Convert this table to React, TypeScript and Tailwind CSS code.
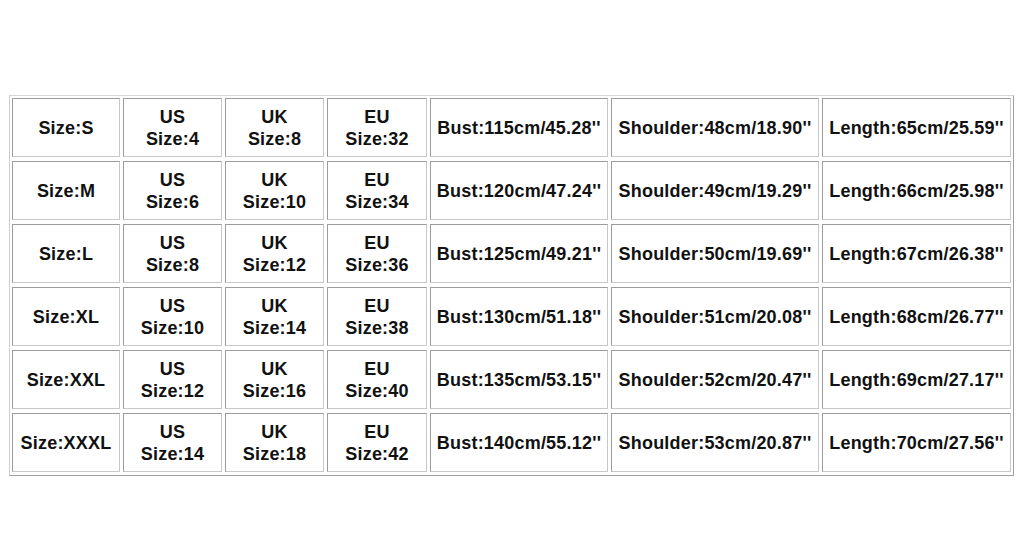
import { Fragment } from 'react'

const rows = [
    { size: 'S', us: '4', uk: '8', eu: '32', bust: '115cm/45.28', shoulder: '48cm/18.90', length: '65cm/25.59' },
    { size: 'M', us: '6', uk: '10', eu: '34', bust: '120cm/47.24', shoulder: '49cm/19.29', length: '66cm/25.98' },
    { size: 'L', us: '8', uk: '12', eu: '36', bust: '125cm/49.21', shoulder: '50cm/19.69', length: '67cm/26.38' },
    { size: 'XL', us: '10', uk: '14', eu: '38', bust: '130cm/51.18', shoulder: '51cm/20.08', length: '68cm/26.77' },
    { size: 'XXL', us: '12', uk: '16', eu: '40', bust: '135cm/53.15', shoulder: '52cm/20.47', length: '69cm/27.17' },
    { size: 'XXXL', us: '14', uk: '18', eu: '42', bust: '140cm/55.12', shoulder: '53cm/20.87', length: '70cm/27.56' },
]

function Cell({ children }: { children: React.ReactNode }) {
    return (
        <div className="flex flex-col items-center justify-center text-center border border-t-[#9c9c9c] border-l-[#9c9c9c] border-b-[#c8c8c8] border-r-[#c8c8c8] bg-white">
            {children}
        </div>
    )
}

export default function App() {
    return (
        <div className="w-[1024px] h-[550px] bg-white pt-[95px] pl-[9px] font-['Liberation_Sans',Arial,sans-serif] font-bold text-[18px] leading-[22px] tracking-[0.2px] text-[#111]">
            <div className="inline-block p-[2px] pb-[3px] border border-t-[#d6d6d6] border-l-[#cdcdcd] border-b-[#9e9e9e] border-r-[#9e9e9e]">
                <div className="grid grid-cols-[108px_99px_99px_100px_178px_208px_189px] auto-rows-[59px] gap-x-[3px] gap-y-[4px]">
                    {rows.map((r) => (
                        <Fragment key={r.size}>
                            <Cell>Size:{r.size}</Cell>
                            <Cell><span>US</span><span>Size:{r.us}</span></Cell>
                            <Cell><span>UK</span><span>Size:{r.uk}</span></Cell>
                            <Cell><span>EU</span><span>Size:{r.eu}</span></Cell>
                            <Cell>Bust:{r.bust}''</Cell>
                            <Cell>Shoulder:{r.shoulder}''</Cell>
                            <Cell>Length:{r.length}''</Cell>
                        </Fragment>
                    ))}
                </div>
            </div>
        </div>
    )
}
